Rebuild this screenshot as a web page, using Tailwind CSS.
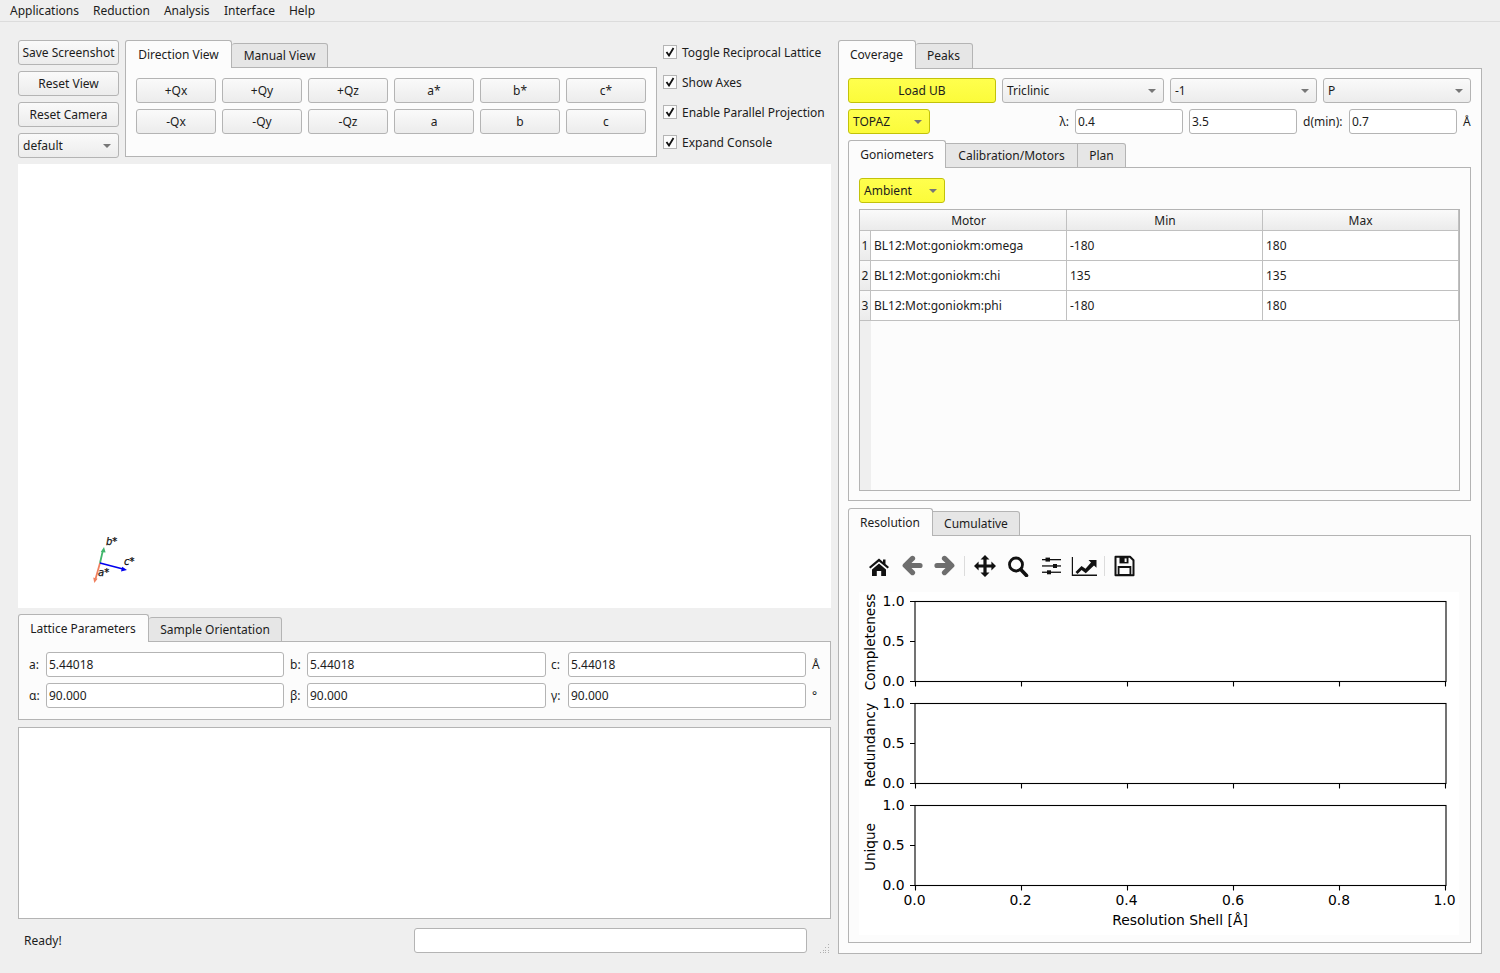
<!DOCTYPE html>
<html lang="en">
<head>
  <meta charset="UTF-8" />
  <script src="https://cdn.jsdelivr.net/npm/@tailwindcss/browser@4"></script>
  <title>Garnet</title>
</head>
<body class="bg-[#efefef] text-[#1c1c1c] text-[12px] leading-none font-['Noto_Sans',sans-serif] w-[1500px] h-[973px] overflow-hidden">
  <!-- menu -->
  <nav class="h-[22px] border-b border-[#dcdcdc] flex items-center pl-[10px] gap-[14px]">
    <span>Applications</span><span>Reduction</span><span>Analysis</span><span class="ml-[0.5px]">Interface</span><span>Help</span>
  </nav>

  <div class="flex pl-[18px] pt-[18px] gap-[6px]">
    <!-- left column -->
    <div class="w-[814px] flex flex-col">
      <div class="flex h-[124px]">
        <div class="w-[101px] flex flex-col gap-[6px] mr-[6px]">
          <button class="h-[25px] rounded-[3px] border border-[#b4b4b4] bg-linear-to-b from-[#fafafa] to-[#ececec]">Save Screenshot</button>
          <button class="h-[25px] rounded-[3px] border border-[#b4b4b4] bg-linear-to-b from-[#fafafa] to-[#ececec]">Reset View</button>
          <button class="h-[25px] rounded-[3px] border border-[#b4b4b4] bg-linear-to-b from-[#fafafa] to-[#ececec]">Reset Camera</button>
          <div class="h-[25px] rounded-[3px] border border-[#b4b4b4] bg-linear-to-b from-[#fafafa] to-[#ececec] flex items-center justify-between pl-[4px] pr-[7px]">
            <span>default</span><span class="w-0 h-0 border-x-[4px] border-x-transparent border-t-[4px] border-t-[#777]"></span>
          </div>
        </div>
        <div class="w-[532px] flex flex-col">
          <div class="flex h-[28px] items-end relative z-10 -mb-[1px]">
            <div class="h-[28px] w-[107px] bg-[#fcfcfc] border border-[#b4b4b4] border-b-0 rounded-t-[3px] flex items-center justify-center">Direction View</div>
            <div class="h-[25px] w-[96px] bg-[#e6e6e6] border border-l-0 border-[#b4b4b4] rounded-t-[3px] flex items-center justify-center">Manual View</div>
          </div>
          <div class="h-[90px] bg-[#fcfcfc] border border-[#b4b4b4] pl-[10px] pt-[10px] grid grid-cols-[repeat(6,80px)] auto-rows-[25px] gap-x-[6px] gap-y-[6px]">
            <button class="rounded-[3px] border border-[#b4b4b4] bg-linear-to-b from-[#fafafa] to-[#ececec]">+Qx</button>
            <button class="rounded-[3px] border border-[#b4b4b4] bg-linear-to-b from-[#fafafa] to-[#ececec]">+Qy</button>
            <button class="rounded-[3px] border border-[#b4b4b4] bg-linear-to-b from-[#fafafa] to-[#ececec]">+Qz</button>
            <button class="rounded-[3px] border border-[#b4b4b4] bg-linear-to-b from-[#fafafa] to-[#ececec]">a*</button>
            <button class="rounded-[3px] border border-[#b4b4b4] bg-linear-to-b from-[#fafafa] to-[#ececec]">b*</button>
            <button class="rounded-[3px] border border-[#b4b4b4] bg-linear-to-b from-[#fafafa] to-[#ececec]">c*</button>
            <button class="rounded-[3px] border border-[#b4b4b4] bg-linear-to-b from-[#fafafa] to-[#ececec]">-Qx</button>
            <button class="rounded-[3px] border border-[#b4b4b4] bg-linear-to-b from-[#fafafa] to-[#ececec]">-Qy</button>
            <button class="rounded-[3px] border border-[#b4b4b4] bg-linear-to-b from-[#fafafa] to-[#ececec]">-Qz</button>
            <button class="rounded-[3px] border border-[#b4b4b4] bg-linear-to-b from-[#fafafa] to-[#ececec]">a</button>
            <button class="rounded-[3px] border border-[#b4b4b4] bg-linear-to-b from-[#fafafa] to-[#ececec]">b</button>
            <button class="rounded-[3px] border border-[#b4b4b4] bg-linear-to-b from-[#fafafa] to-[#ececec]">c</button>
          </div>
        </div>
        <div class="flex flex-col gap-[16px] pl-[6px] pt-[5px]">
          <label class="flex items-center gap-[5px] h-[14px]"><span class="w-[14px] h-[14px] border border-[#b4b4b4] bg-[#fcfcfc] flex items-center justify-center"><svg width="10" height="10" viewBox="0 0 10 10"><path d="M1.5 5 L4 8.5 L8.5 1" fill="none" stroke="#111" stroke-width="1.8"/></svg></span><span class="pt-[2px]">Toggle Reciprocal Lattice</span></label>
          <label class="flex items-center gap-[5px] h-[14px]"><span class="w-[14px] h-[14px] border border-[#b4b4b4] bg-[#fcfcfc] flex items-center justify-center"><svg width="10" height="10" viewBox="0 0 10 10"><path d="M1.5 5 L4 8.5 L8.5 1" fill="none" stroke="#111" stroke-width="1.8"/></svg></span><span class="pt-[2px]">Show Axes</span></label>
          <label class="flex items-center gap-[5px] h-[14px]"><span class="w-[14px] h-[14px] border border-[#b4b4b4] bg-[#fcfcfc] flex items-center justify-center"><svg width="10" height="10" viewBox="0 0 10 10"><path d="M1.5 5 L4 8.5 L8.5 1" fill="none" stroke="#111" stroke-width="1.8"/></svg></span><span class="pt-[2px]">Enable Parallel Projection</span></label>
          <label class="flex items-center gap-[5px] h-[14px]"><span class="w-[14px] h-[14px] border border-[#b4b4b4] bg-[#fcfcfc] flex items-center justify-center"><svg width="10" height="10" viewBox="0 0 10 10"><path d="M1.5 5 L4 8.5 L8.5 1" fill="none" stroke="#111" stroke-width="1.8"/></svg></span><span class="pt-[2px]">Expand Console</span></label>
        </div>
      </div>

      <!-- 3d view -->
      <div class="w-[813px] h-[444px] bg-white relative">
        <svg class="absolute left-[70px] top-[366px]" width="60" height="60" viewBox="0 0 60 60">
          <line x1="12" y1="33" x2="7.5" y2="49" stroke="#f0805f" stroke-width="1.8"/>
          <path d="M6.3 53 L5.2 47.6 L9.6 48.8 Z" fill="#f0805f"/>
          <line x1="12" y1="33" x2="15" y2="20" stroke="#41b56c" stroke-width="1.8"/>
          <path d="M16 17 L12.8 22 L17.6 22.6 Z" fill="#41b56c"/>
          <line x1="12" y1="33" x2="35" y2="39" stroke="#0000ee" stroke-width="1.8"/>
          <path d="M39 40 L33 41.4 L34.2 36.8 Z" fill="#0000ee"/>
          <text x="18" y="15" font-family="DejaVu Sans" font-size="10" font-style="italic" fill="#111" stroke="#111" stroke-width="0.25">b*</text>
          <text x="36" y="35" font-family="DejaVu Sans" font-size="10" font-style="italic" fill="#111" stroke="#111" stroke-width="0.25">c*</text>
          <text x="10" y="46" font-family="DejaVu Sans" font-size="10" font-style="italic" fill="#111" stroke="#111" stroke-width="0.25">a*</text>
        </svg>
      </div>

      <!-- lattice tabs -->
      <div class="flex h-[28px] items-end relative z-10 mt-[6px] -mb-[1px]">
        <div class="h-[28px] w-[131px] bg-[#fcfcfc] border border-[#b4b4b4] border-b-0 rounded-t-[3px] flex items-center justify-center pr-[1px]">Lattice Parameters</div>
        <div class="h-[25px] w-[133px] bg-[#e6e6e6] border border-l-0 border-[#b4b4b4] rounded-t-[3px] flex items-center justify-center">Sample Orientation</div>
      </div>
      <div class="w-[813px] h-[79px] bg-[#fcfcfc] border border-[#b4b4b4] pt-[10px] grid grid-cols-[27px_238px_23px_239px_22px_238px_1fr] auto-rows-[25px] gap-y-[6px] items-center">
        <span class="pl-[10px]">a:</span><div class="h-[25px] bg-white border border-[#b4b4b4] rounded-[3px] flex items-center pl-[2px]">5.44018</div>
        <span class="pl-[6px]">b:</span><div class="h-[25px] bg-white border border-[#b4b4b4] rounded-[3px] flex items-center pl-[2px]">5.44018</div>
        <span class="pl-[5px]">c:</span><div class="h-[25px] bg-white border border-[#b4b4b4] rounded-[3px] flex items-center pl-[2px]">5.44018</div>
        <span class="pl-[6px]">Å</span>
        <span class="pl-[10px]">α:</span><div class="h-[25px] bg-white border border-[#b4b4b4] rounded-[3px] flex items-center pl-[2px]">90.000</div>
        <span class="pl-[6px]">β:</span><div class="h-[25px] bg-white border border-[#b4b4b4] rounded-[3px] flex items-center pl-[2px]">90.000</div>
        <span class="pl-[5px]">γ:</span><div class="h-[25px] bg-white border border-[#b4b4b4] rounded-[3px] flex items-center pl-[2px]">90.000</div>
        <span class="pl-[6px]">°</span>
      </div>

      <!-- console -->
      <div class="w-[813px] h-[192px] bg-white border border-[#b4b4b4] mt-[7px]"></div>

      <!-- status -->
      <div class="flex items-center h-[25px] mt-[9px] relative w-[813px]">
        <span class="pl-[6px] w-[396px]">Ready!</span>
        <div class="w-[393px] h-[25px] bg-white border border-[#b4b4b4] rounded-[3px]"></div>
        <svg class="absolute right-[1px] bottom-[-1px]" width="10" height="10" viewBox="0 0 10 10" fill="#b0b0b0">
          <rect x="8" y="0" width="1" height="1"/><rect x="5" y="3" width="1" height="1"/><rect x="8" y="3" width="1" height="1"/><rect x="3" y="6" width="1" height="1"/><rect x="5" y="6" width="1" height="1"/><rect x="8" y="6" width="1" height="1"/><rect x="0" y="8" width="1" height="1"/><rect x="3" y="8" width="1" height="1"/><rect x="5" y="8" width="1" height="1"/><rect x="8" y="8" width="1" height="1"/>
        </svg>
      </div>
    </div>

    <!-- right column -->
    <div class="w-[644px] flex flex-col">
      <div class="flex h-[29px] items-end relative z-10 -mb-[1px]">
        <div class="h-[29px] w-[78px] bg-[#fcfcfc] border border-[#b4b4b4] border-b-0 rounded-t-[3px] flex items-center justify-center pr-[1px]">Coverage</div>
        <div class="h-[26px] w-[57px] bg-[#e6e6e6] border border-l-0 border-[#b4b4b4] rounded-t-[3px] flex items-center justify-center pr-[1px]">Peaks</div>
      </div>
      <div class="h-[886px] bg-[#fcfcfc] border border-[#b4b4b4] pl-[9px] pt-[9px] flex flex-col">
        <div class="flex gap-[6px] h-[25px]">
          <button class="w-[148px] rounded-[3px] border border-[#c2c20a] bg-linear-to-b from-[#ffff4d] to-[#fbfb3a]">Load UB</button>
          <div class="w-[162px] rounded-[3px] border border-[#b4b4b4] bg-linear-to-b from-[#fafafa] to-[#ececec] flex items-center justify-between pl-[4px] pr-[7px]"><span>Triclinic</span><span class="w-0 h-0 border-x-[4px] border-x-transparent border-t-[4px] border-t-[#777]"></span></div>
          <div class="w-[147px] rounded-[3px] border border-[#b4b4b4] bg-linear-to-b from-[#fafafa] to-[#ececec] flex items-center justify-between pl-[4px] pr-[7px]"><span>-1</span><span class="w-0 h-0 border-x-[4px] border-x-transparent border-t-[4px] border-t-[#777]"></span></div>
          <div class="w-[148px] rounded-[3px] border border-[#b4b4b4] bg-linear-to-b from-[#fafafa] to-[#ececec] flex items-center justify-between pl-[4px] pr-[7px]"><span>P</span><span class="w-0 h-0 border-x-[4px] border-x-transparent border-t-[4px] border-t-[#777]"></span></div>
        </div>
        <div class="flex items-center h-[25px] mt-[6px]">
          <div class="w-[82px] h-[25px] rounded-[3px] border border-[#c2c20a] bg-linear-to-b from-[#ffff4d] to-[#fbfb3a] flex items-center justify-between pl-[4px] pr-[7px]"><span>TOPAZ</span><span class="w-0 h-0 border-x-[4px] border-x-transparent border-t-[4px] border-t-[#777]"></span></div>
          <span class="w-[145px] text-right pr-[6px]">λ:</span>
          <div class="w-[108px] h-[25px] bg-white border border-[#b4b4b4] rounded-[3px] flex items-center pl-[2px]">0.4</div>
          <div class="w-[108px] h-[25px] bg-white border border-[#b4b4b4] rounded-[3px] flex items-center pl-[2px] ml-[6px]">3.5</div>
          <span class="ml-[6px] w-[46px]">d(min):</span>
          <div class="w-[108px] h-[25px] bg-white border border-[#b4b4b4] rounded-[3px] flex items-center pl-[2px]">0.7</div>
          <span class="ml-[6px]">Å</span>
        </div>

        <!-- goniometer tabs -->
        <div class="flex h-[27px] items-end relative z-10 mt-[7px] -mb-[1px]">
          <div class="h-[28px] w-[98px] bg-[#fcfcfc] border border-[#b4b4b4] border-b-0 rounded-t-[3px] flex items-center justify-center">Goniometers</div>
          <div class="h-[25px] w-[132px] bg-[#e6e6e6] border border-l-0 border-[#b4b4b4] flex items-center justify-center">Calibration/Motors</div>
          <div class="h-[25px] w-[48px] bg-[#e6e6e6] border border-l-0 border-[#b4b4b4] rounded-tr-[3px] flex items-center justify-center">Plan</div>
        </div>
        <div class="w-[623px] h-[334px] border border-[#b4b4b4] pl-[10px] pt-[10px] flex flex-col">
          <div class="w-[86px] h-[25px] rounded-[3px] border border-[#c2c20a] bg-linear-to-b from-[#ffff4d] to-[#fbfb3a] flex items-center justify-between pl-[4px] pr-[7px]"><span>Ambient</span><span class="w-0 h-0 border-x-[4px] border-x-transparent border-t-[4px] border-t-[#777]"></span></div>
          <div class="w-[601px] h-[282px] mt-[6px] border border-[#b4b4b4] bg-[#fcfcfc] flex flex-col">
            <div class="flex h-[21px] bg-linear-to-b from-[#fafafa] to-[#ebebeb] border-b border-[#c0c0c0] shrink-0">
              <div class="w-[207px] border-r border-[#c0c0c0] flex items-center justify-center pl-[11px] pt-[1px]">Motor</div>
              <div class="w-[196px] border-r border-[#c0c0c0] flex items-center justify-center pl-[1px] pt-[1px]">Min</div>
              <div class="w-[196px] border-r border-[#c0c0c0] flex items-center justify-center pt-[1px]">Max</div>
            </div>
            <div class="flex-1 flex">
              <div class="w-[11px] bg-[#efefef] flex flex-col shrink-0">
                <div class="h-[30px] border-b border-r border-[#c0c0c0] bg-linear-to-b from-[#fafafa] to-[#ebebeb] flex items-center justify-center">1</div>
                <div class="h-[30px] border-b border-r border-[#c0c0c0] bg-linear-to-b from-[#fafafa] to-[#ebebeb] flex items-center justify-center">2</div>
                <div class="h-[30px] border-b border-r border-[#c0c0c0] bg-linear-to-b from-[#fafafa] to-[#ebebeb] flex items-center justify-center">3</div>
              </div>
              <div class="flex-1 flex flex-col">
                <div class="grid grid-cols-[196px_196px_196px] h-[30px] border-b border-[#c0c0c0] bg-white items-center"><span class="pl-[3px] h-full flex items-center border-r border-[#c0c0c0]">BL12:Mot:goniokm:omega</span><span class="pl-[3px] h-full flex items-center border-r border-[#c0c0c0]">-180</span><span class="pl-[3px] h-full flex items-center border-r border-[#c0c0c0]">180</span></div>
                <div class="grid grid-cols-[196px_196px_196px] h-[30px] border-b border-[#c0c0c0] bg-white items-center"><span class="pl-[3px] h-full flex items-center border-r border-[#c0c0c0]">BL12:Mot:goniokm:chi</span><span class="pl-[3px] h-full flex items-center border-r border-[#c0c0c0]">135</span><span class="pl-[3px] h-full flex items-center border-r border-[#c0c0c0]">135</span></div>
                <div class="grid grid-cols-[196px_196px_196px] h-[30px] border-b border-[#c0c0c0] bg-white items-center"><span class="pl-[3px] h-full flex items-center border-r border-[#c0c0c0]">BL12:Mot:goniokm:phi</span><span class="pl-[3px] h-full flex items-center border-r border-[#c0c0c0]">-180</span><span class="pl-[3px] h-full flex items-center border-r border-[#c0c0c0]">180</span></div>
              </div>
            </div>
          </div>
        </div>

        <!-- resolution tabs -->
        <div class="flex h-[27px] items-end relative z-10 mt-[8px] -mb-[1px]">
          <div class="h-[28px] w-[85px] bg-[#fcfcfc] border border-[#b4b4b4] border-b-0 rounded-t-[3px] flex items-center justify-center pr-[1px]">Resolution</div>
          <div class="h-[25px] w-[87px] bg-[#e6e6e6] border border-l-0 border-[#b4b4b4] rounded-tr-[3px] flex items-center justify-center">Cumulative</div>
        </div>
        <div class="w-[623px] h-[408px] border border-[#b4b4b4] pl-[10px] pt-[19px] flex flex-col">
          <!-- toolbar -->
          <div class="h-[22px] flex items-center pl-[9px] shrink-0">
            <svg width="270" height="22" viewBox="0 0 270 22">
              <!-- home -->
              <path d="M1 12 L11 3.5 L15 6.9 V4.5 H17.5 V9 L21 12 L19.6 13.6 L11 6.4 L2.4 13.6 Z" fill="#111"/>
              <path d="M4 14.5 L11 8.6 L18 14.5 V21 H13.2 V16 H8.8 V21 H4 Z" fill="#111"/>
              <!-- back -->
              <path d="M44.5 3.4 L37.2 10.5 L44.5 17.6 M38.5 10.5 H52" fill="none" stroke="#6e6e6e" stroke-width="5.2" stroke-linejoin="round" stroke-linecap="round"/>
              <!-- forward -->
              <path d="M76.5 3.4 L83.8 10.5 L76.5 17.6 M82.5 10.5 H69" fill="none" stroke="#6e6e6e" stroke-width="5.2" stroke-linejoin="round" stroke-linecap="round"/>
              <rect x="96" y="1" width="1" height="20" fill="#dcdcdc"/>
              <!-- pan -->
              <path d="M117 0 L121.5 4.6 H118.6 V9.4 H123.4 V6.5 L128 11 L123.4 15.5 V12.6 H118.6 V17.4 H121.5 L117 22 L112.5 17.4 H115.4 V12.6 H110.6 V15.5 L106 11 L110.6 6.5 V9.4 H115.4 V4.6 H112.5 Z" fill="#111"/>
              <!-- zoom -->
              <circle cx="148" cy="9.5" r="6.5" fill="none" stroke="#111" stroke-width="2.8"/>
              <path d="M152.8 14.5 L158.5 20.5" stroke="#111" stroke-width="3.6" stroke-linecap="round"/>
              <!-- sliders -->
              <g fill="#111">
                <rect x="174" y="4" width="19" height="1.3"/><rect x="174" y="10.3" width="19" height="1.3"/><rect x="174" y="16.6" width="19" height="1.3"/>
                <rect x="177.5" y="2.6" width="4.5" height="4"/><rect x="185" y="9" width="4" height="4"/><rect x="179" y="15.3" width="4" height="4"/>
              </g>
              <!-- chart -->
              <path d="M205 2 V19.6 H229 V21 H203.8 V2 Z" fill="#111"/>
              <path d="M207.5 17 L213.5 11 L217.5 13.8 L223 7.6 L220.5 5 H228.5 V12.8 L226 10.4 L217.8 18.2 L213.6 15 L209.5 19 Z" fill="#111"/>
              <rect x="236" y="1" width="1" height="20" fill="#dcdcdc"/>
              <!-- save -->
              <path d="M247.5 1.8 H262 L265.5 5.3 V20.2 H247.5 Z" fill="none" stroke="#111" stroke-width="2" stroke-linejoin="round"/>
              <path d="M251.5 2 H260.5 V8.4 H251.5 Z" fill="#111"/>
              <rect x="256.6" y="3.4" width="2" height="3.6" fill="#fcfcfc"/>
              <path d="M250.6 12 H262.4 V20 H250.6 Z" fill="none" stroke="#111" stroke-width="1.8"/>
            </svg>
          </div>
          <!-- figure -->
          <div class="w-[600px] h-[343px] mt-[15px] bg-white">
            <svg width="600" height="343" viewBox="0 0 600 343" font-family="DejaVu Sans" font-size="13.9" fill="#000">
              <g fill="none" stroke="#000" stroke-width="1.1">
                <rect x="56" y="9.5" width="531" height="80"/>
                <rect x="56" y="111.5" width="531" height="80"/>
                <rect x="56" y="213.5" width="531" height="80"/>
                <path d="M51 9.5H56M51 49.5H56M51 89.5H56M51 111.5H56M51 151.5H56M51 191.5H56M51 213.5H56M51 253.5H56M51 293.5H56"/>
                <path d="M56.5 89.5v5M162.5 89.5v5M268.5 89.5v5M374.5 89.5v5M480.5 89.5v5M586.5 89.5v5"/>
                <path d="M56.5 191.5v5M162.5 191.5v5M268.5 191.5v5M374.5 191.5v5M480.5 191.5v5M586.5 191.5v5"/>
                <path d="M56.5 293.5v5M162.5 293.5v5M268.5 293.5v5M374.5 293.5v5M480.5 293.5v5M586.5 293.5v5"/>
              </g>
              <g text-anchor="end">
                <text x="45.5" y="13.5">1.0</text><text x="45.5" y="53.5">0.5</text><text x="45.5" y="93.5">0.0</text>
                <text x="45.5" y="115.5">1.0</text><text x="45.5" y="155.5">0.5</text><text x="45.5" y="195.5">0.0</text>
                <text x="45.5" y="217.5">1.0</text><text x="45.5" y="257.5">0.5</text><text x="45.5" y="297.5">0.0</text>
              </g>
              <g text-anchor="middle">
                <text x="55.5" y="313">0.0</text><text x="161.5" y="313">0.2</text><text x="267.5" y="313">0.4</text><text x="374" y="313">0.6</text><text x="480" y="313">0.8</text><text x="585.5" y="313">1.0</text>
                <text x="321" y="333">Resolution Shell [Å]</text>
                <text transform="translate(16 50) rotate(-90)" font-size="13.6">Completeness</text>
                <text transform="translate(16 153) rotate(-90)" font-size="13.6">Redundancy</text>
                <text transform="translate(16 255) rotate(-90)" font-size="13.6">Unique</text>
              </g>
            </svg>
          </div>
        </div>
      </div>
    </div>
  </div>
</body>
</html>
